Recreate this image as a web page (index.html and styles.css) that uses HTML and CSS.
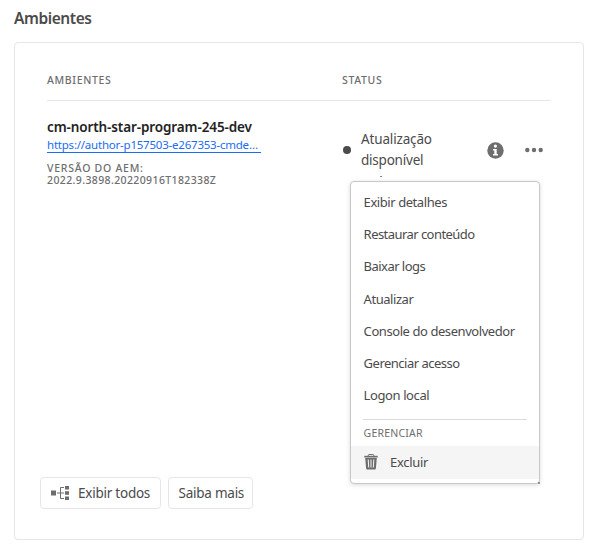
FILE: index.html
```html
<!DOCTYPE html>
<html lang="pt-BR">
<head>
<meta charset="utf-8">
<title>Ambientes</title>
<link rel="stylesheet" href="styles.css">
</head>
<body>
<h1 class="title"><span>Ambientes</span></h1>
<main class="card">
  <div class="head">
    <div><span class="h-env">AMBIENTES</span></div>
    <div><span class="h-status">STATUS</span></div>
  </div>
  <div class="row">
    <div class="env">
      <div class="name"><span>cm-north-star-program-245-dev</span></div>
      <a class="url"><span>https://author-p157503-e267353-cmde…</span></a>
      <div class="version"><span class="v-label">VERSÃO DO AEM:</span><span class="v-num">2022.9.3898.20220916T182338Z</span></div>
    </div>
    <div class="status">
      <i class="dot"></i>
      <div class="status-text"><span class="s1">Atualização</span><br><span class="s2">disponível</span><i class="accent"></i></div>
      <svg class="info" width="17" height="17" viewBox="0 0 17 17"><circle cx="8.5" cy="8.5" r="8.2" fill="#6e6e6e"/><circle cx="8.4" cy="4.1" r="1.6" fill="#fff"/><path d="M6 7h3.7v5H11v1.5H6V12h1.3V8.5H6z" fill="#fff"/></svg>
      <svg class="more" width="18" height="6" viewBox="0 0 18 6" fill="#6e6e6e"><circle cx="2.3" cy="3" r="2.2"/><circle cx="9" cy="3" r="2.2"/><circle cx="15.7" cy="3" r="2.2"/></svg>
      <div class="menu">
        <div class="item"><span class="m1">Exibir detalhes</span></div>
        <div class="item"><span class="m2">Restaurar conteúdo</span></div>
        <div class="item"><span class="m3">Baixar logs</span></div>
        <div class="item"><span class="m4">Atualizar</span></div>
        <div class="item"><span class="m5">Console do desenvolvedor</span></div>
        <div class="item"><span class="m6">Gerenciar acesso</span></div>
        <div class="item"><span class="m7">Logon local</span></div>
        <hr>
        <div class="section"><span>GERENCIAR</span></div>
        <div class="item hover">
          <svg width="14" height="16" viewBox="0 0 14 16"><path d="M4.300 2V1.300Q4.300.5 5.100.5h3.800q.8 0 .8.8V2" fill="none" stroke="#6e6e6e"/><path d="M.3 1.800h13.400v1.700H.3z" fill="#6e6e6e"/><path fill-rule="evenodd" d="M1.200 4h11.600l-.9 10.600q-.1.900-1 .9H3.100q-.9 0-1-.9zM3.700 5.500l.5 8h1l-.4-8zM6.500 5.500v8h1v-8zM9.300 5.500l-.5 8h1l.5-8z" fill="#6e6e6e"/></svg>
          <span class="m8">Excluir</span>
        </div>
      </div>
      <i class="corner"></i>
    </div>
  </div>
  <div class="buttons">
    <button class="all"><svg width="18" height="14" viewBox="0 0 18 14"><path fill="#6e6e6e" d="M0 4.500h5v5H0zM14 0h4v3.500h-4zM14 5.300h4v3.400h-4zM14 10.500h4V14h-4z"/><path d="M6 7h7M13 1.500H9.500v11H13" fill="none" stroke="#6e6e6e"/></svg><span class="b1">Exibir todos</span></button>
    <button class="learn"><span class="b2">Saiba mais</span></button>
  </div>
</main>
</body>
</html>
```
FILE: styles.css
```css
* { box-sizing: border-box; }
body { margin: 0; height: 545px; overflow: hidden; padding: 7px 17px 0 14px; background: #fff; color: #4b4b4b; font: 13px/20px "Noto Sans", "Open Sans", sans-serif; }
span { white-space: nowrap; }
.title { margin: 0; height: 35px; font-size: 15.5px; line-height: 22px; font-weight: 600; letter-spacing: -.42px; }
.card { height: 498px; border: 1px solid #e6e6e6; border-radius: 4px; padding: 27px 32px 0; display: flex; flex-direction: column; }
.head { display: grid; grid-template-columns: 295px 1fr; height: 31px; border-bottom: 1px solid #e6e6e6; font-size: 10.5px; font-weight: 500; letter-spacing: .65px; color: #6e6e6e; }
.row { display: grid; grid-template-columns: 295px 1fr; height: 334px; }
.env { padding-top: 16px; }
.name { height: 20px; font-weight: 600; font-size: 13.5px; letter-spacing: -.11px; color: #222; }
.url { display: block; width: 214px; height: 16px; line-height: 15px; font-size: 11.5px; letter-spacing: -.22px; color: #1a6df0; border-bottom: 1px solid #1a6df0; }
.version { margin-top: 9px; font-size: 10.5px; line-height: 12px; color: #6e6e6e; font-weight: 500; }
.version span { display: block; }
.v-label { letter-spacing: .75px; }
.v-num { letter-spacing: .38px; }
.status { position: relative; display: flex; align-items: center; height: 42px; margin-top: 28px; padding-left: 1px; }
.dot { width: 8px; height: 8px; border-radius: 50%; background: #4b4b4b; }
.status-text { position: relative; width: 125.5px; margin-left: 10px; line-height: 21px; font-size: 13.5px; }
.s1 { letter-spacing: -.15px; }
.s2 { letter-spacing: -.22px; }
.accent { position: absolute; left: 19px; top: 47px; width: 2px; height: 1px; background: #888; }
.info { margin-right: 21px; }
.menu { position: absolute; left: 8px; top: 52px; width: 190px; height: 303px; background: #fff; border: 1px solid #c8c8c8; border-radius: 4px; box-shadow: 0 1px 4px rgba(0,0,0,.15); padding-top: 4.1px; }
.item { height: 32.15px; display: flex; align-items: center; padding-left: 12.6px; }
.m1 { letter-spacing: -.43px; }
.m2 { letter-spacing: -.55px; }
.m3 { letter-spacing: -.54px; }
.m4 { letter-spacing: -.45px; }
.m5 { letter-spacing: -.43px; }
.m6 { letter-spacing: -.5px; }
.m7 { letter-spacing: -.4px; }
.m8 { letter-spacing: -.3px; }
.menu hr { margin: 7.9px 12px 0; border: 0; border-top: 1px solid #dcdcdc; }
.section { height: 26px; line-height: 26px; padding-left: 12.6px; font-size: 10.5px; letter-spacing: .2px; color: #6e6e6e; }
.hover { height: 33px; padding-left: 13px; background: #f5f5f5; gap: 12px; }
.corner { position: absolute; left: 196px; top: 353px; width: 2px; height: 2px; background: #998f8f; }
.buttons { display: flex; gap: 8px; margin: 42px 0 0 -7px; }
button { height: 32px; padding: 0; display: flex; align-items: center; background: #fff; border: 1px solid #e6e6e6; border-radius: 4px; font: inherit; font-size: 13.5px; color: #4b4b4b; }
.all { width: 121px; padding-left: 10px; gap: 9px; }
.learn { width: 85px; margin-left: -1px; padding-left: 9.5px; }
.b1 { letter-spacing: -.24px; }
.b2 { letter-spacing: -.24px; }
```
